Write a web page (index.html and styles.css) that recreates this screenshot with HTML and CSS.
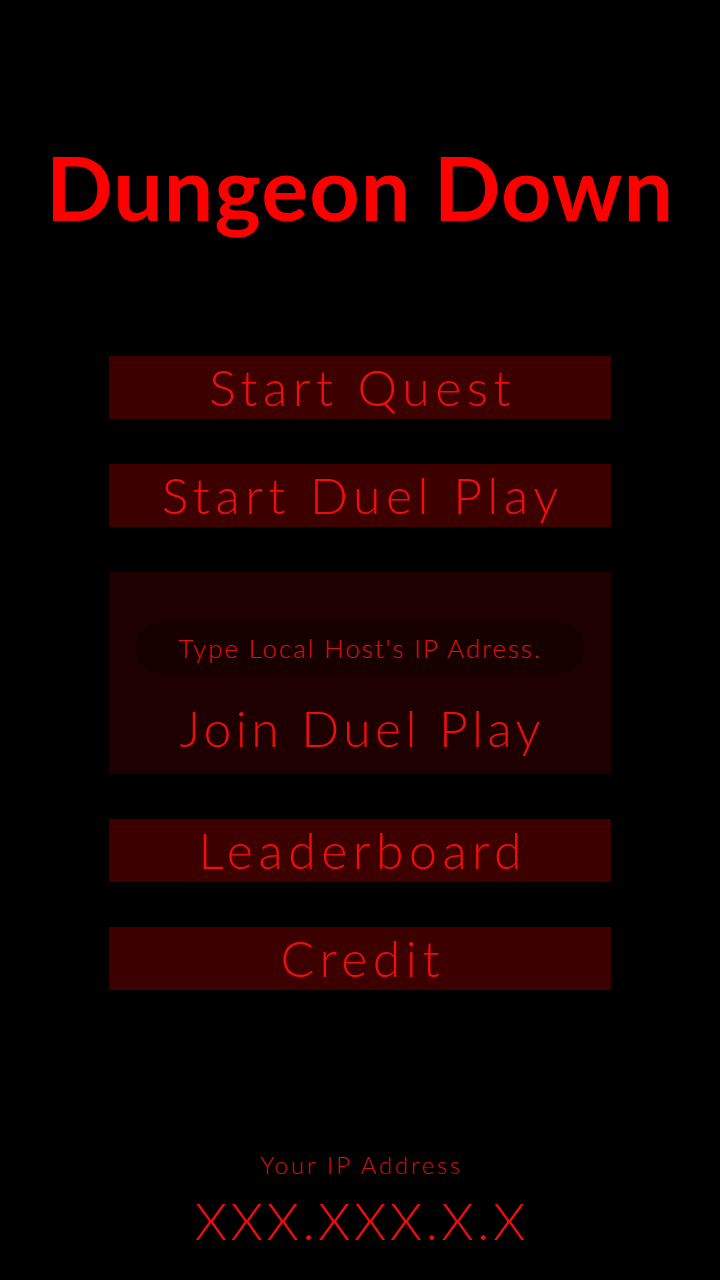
FILE: index.html
```html
<!DOCTYPE html>
<html lang="en">
<head>
    <meta charset="UTF-8">
    <meta name="viewport" content="width=device-width, initial-scale=1.0">
    <title>Dungeon Down</title>
    <link rel="stylesheet" href="styles.css">
</head>
<body>
    <div class="screen">
        <h1 class="title">Dungeon Down</h1>

        <div class="menu">
            <button class="menu-btn">Start Quest</button>
            <button class="menu-btn">Start Duel Play</button>
            <div class="join-box">
                <input class="ip-input" type="text" placeholder="Type Local Host's IP Adress.">
                <button class="join-btn">Join Duel Play</button>
            </div>
            <button class="menu-btn">Leaderboard</button>
            <button class="menu-btn">Credit</button>
        </div>

        <div class="footer">
            <div class="ip-label">Your IP Address</div>
            <div class="ip-value">XXX.XXX.X.X</div>
        </div>
    </div>
</body>
</html>
```

FILE: styles.css
```css
* {
    box-sizing: border-box;
}
body {
    margin: 0;
    background-color: #000;
    font-family: Lato, "Liberation Sans", sans-serif;
    color: #f20d0d;
}
.screen {
    height: 1280px;
    display: flex;
    flex-direction: column;
    align-items: center;
}
.title {
    margin: 137px 0 0;
    font-size: 88px;
    line-height: 100px;
    font-weight: 700;
    color: #ff0000;
    letter-spacing: 1px;
}
.menu {
    margin-top: 119px;
    width: 502px;
    display: flex;
    flex-direction: column;
    gap: 45px;
}
.menu-btn,
.join-btn {
    font-family: inherit;
    font-weight: 300;
    font-size: 50px;
    color: #f20d0d;
    border: none;
    cursor: pointer;
    letter-spacing: 5.5px;
    padding: 0 0 0 5.5px;
}
.menu-btn {
    height: 63px;
    background-color: #3d0000;
    line-height: 63px;
}
.join-box {
    height: 202px;
    background-color: #1f0000;
    padding: 50px 26px 0;
    display: flex;
    flex-direction: column;
    align-items: center;
}
.ip-input {
    width: 100%;
    height: 52px;
    border: none;
    border-radius: 26px;
    background-color: #170000;
    text-align: center;
    font-family: inherit;
    font-size: 26px;
    font-weight: 300;
    color: #f20d0d;
    outline: none;
}
.ip-input::placeholder {
    color: #e01010;
    letter-spacing: 1.9px;
}
.join-btn {
    margin-top: 24px;
    background: none;
    line-height: 60px;
    letter-spacing: 4.4px;
    padding-left: 4.4px;
}
.footer {
    margin-top: 160px;
    text-align: center;
}
.ip-label {
    font-size: 24px;
    font-weight: 300;
    line-height: 30px;
    letter-spacing: 2.8px;
    padding-left: 2.8px;
    color: #d81010;
}
.ip-value {
    margin-top: 10px;
    font-size: 52px;
    font-weight: 300;
    line-height: 60px;
    letter-spacing: 3.5px;
    padding-left: 3.5px;
}
```
